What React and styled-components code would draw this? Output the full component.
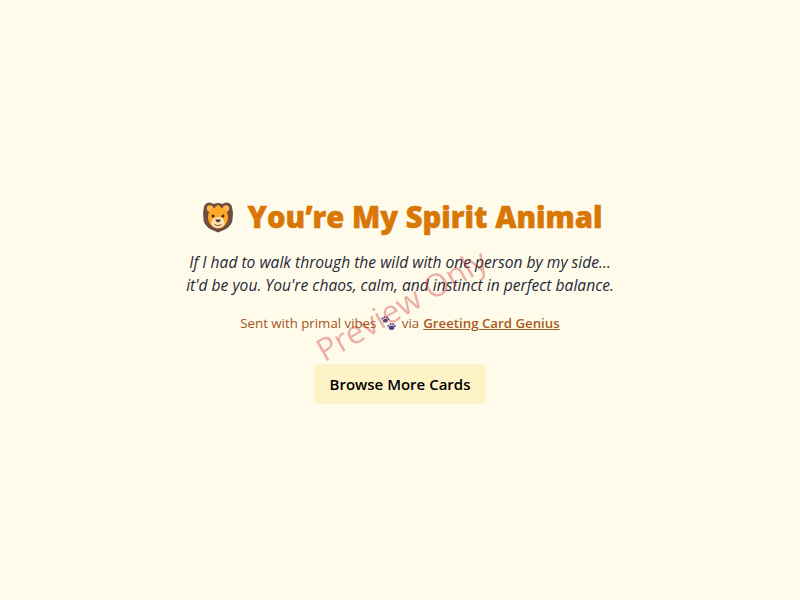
import React from 'react';
import styled, { createGlobalStyle } from 'styled-components';

const GlobalStyle = createGlobalStyle`
  html, body, #root {
    height: 100%;
    margin: 0;
  }
  body {
    background: #fffbeb;
    font-family: "Open Sans", "Noto Sans", "Liberation Sans", sans-serif;
  }
`;

const Page = styled.main`
  position: relative;
  box-sizing: border-box;
  height: 600px;
  padding-top: 3px;
  display: flex;
  flex-direction: column;
  align-items: center;
  justify-content: center;
  text-align: center;
  overflow: hidden;
`;

const Title = styled.h1`
  display: flex;
  align-items: center;
  gap: 14px;
  margin: 0 0 16px 4px;
  color: #d97706;
  font-size: 29.25px;
  font-weight: 800;
  line-height: 36px;
  -webkit-text-stroke: 0.5px #d97706;
`;

const Message = styled.p`
  margin: 0 0 16px;
  color: #1f2937;
  font-size: 15.6px;
  font-style: italic;
  line-height: 23px;
`;

const Credit = styled.p`
  display: flex;
  align-items: center;
  margin: 0 0 31px;
  color: #a4541a;
  font-size: 13.25px;
  line-height: 20px;
`;

const CreditLink = styled.a`
  margin-left: 4px;
  color: #a85a20;
  font-weight: 600;
  text-decoration: underline;
`;

const Paw = styled.svg`
  width: 15px;
  height: 15px;
  margin: 0 6px 0 4.5px;
`;

const Button = styled.button`
  width: 172px;
  height: 40px;
  border: 0;
  border-radius: 4px;
  background: #fef3c7;
  color: #000;
  font-family: inherit;
  font-size: 15px;
  font-weight: 600;
`;

const Watermark = styled.div`
  position: absolute;
  left: 401px;
  top: 304px;
  transform: translate(-50%, -50%) rotate(-30deg);
  color: rgba(205, 45, 45, 0.38);
  font-size: 31.5px;
  white-space: nowrap;
  pointer-events: none;
`;

const LionIcon = () => (
  <svg width="32" height="32" viewBox="0 0 32 32" aria-hidden="true">
    <path d="M2 6Q3 1.500 8 1.500L12 3Q16 1 20 3L24 1.500Q29 1.500 30 6L31 12 30.500 19Q29.500 25 23 28.500L16 31.500 9 28.500Q2.500 25 1.500 19L1 12z" fill="#6d4c41" />
    <circle cx="8" cy="7.500" r="3.200" fill="#ffb74d" />
    <circle cx="24" cy="7.500" r="3.200" fill="#ffb74d" />
    <path d="M16 3.500l3 3c4 1 7 4.500 7 9.500 0 6-4 11.500-10 11.500S6 22 6 16c0-5 3-8.500 7-9.500z" fill="#ffa726" />
    <ellipse cx="16" cy="21.500" rx="6.500" ry="5.500" fill="#ffe0b2" />
    <circle cx="11" cy="15" r="1.500" fill="#3e2723" />
    <circle cx="21" cy="15" r="1.500" fill="#3e2723" />
    <path d="M13.400 18.500h5.200c0 1.500-1.400 2.700-2.600 2.700s-2.600-1.200-2.600-2.700z" fill="#4e342e" />
    <path d="M13 23.800c1.800 1 4.200 1 6 0" fill="none" stroke="#6d4c41" strokeWidth="1" strokeLinecap="round" />
  </svg>
);

const PawIcon = () => (
  <Paw viewBox="0 0 15 15" aria-hidden="true">
    <g fill="#4f4385">
      <ellipse cx="4.300" cy="4.700" rx="2.500" ry="1.900" />
      <circle cx="1.400" cy="2.500" r="1" />
      <circle cx="3.400" cy="1.200" r="1" />
      <circle cx="5.800" cy="1.500" r="1" />
      <circle cx="7.400" cy="3.200" r=".9" />
      <ellipse cx="10.500" cy="11.800" rx="2.800" ry="2.200" />
      <circle cx="7.300" cy="9.800" r="1" />
      <circle cx="9.600" cy="8" r="1" />
      <circle cx="12.100" cy="8.200" r="1" />
      <circle cx="13.900" cy="10" r="1" />
    </g>
  </Paw>
);

export default function App() {
  return (
    <>
      <GlobalStyle />
      <Page>
        <Title>
          <LionIcon />
          <span>You’re My Spirit Animal</span>
        </Title>
        <Message>
          If I had to walk through the wild with one person by my side...
          <br />
          it'd be you. You're chaos, calm, and instinct in perfect balance.
        </Message>
        <Credit>
          Sent with primal vibes
          <PawIcon />
          via
          <CreditLink href="#">Greeting Card Genius</CreditLink>
        </Credit>
        <Button>Browse More Cards</Button>
        <Watermark>Preview Only</Watermark>
      </Page>
    </>
  );
}
